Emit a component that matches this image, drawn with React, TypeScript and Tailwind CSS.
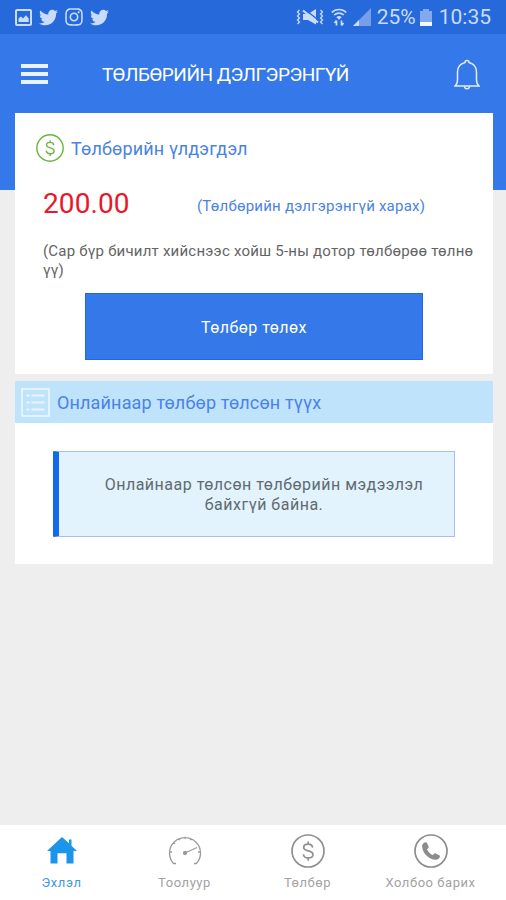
import React from "react";
import { FaTwitter, FaInstagram } from "react-icons/fa";

const DollarIcon: React.FC<{ className?: string }> = ({ className }) => (
  <svg
    viewBox="0 0 34 34"
    className={className}
    fill="none"
    stroke="currentColor"
    strokeWidth="1.7"
  >
    <circle cx="17" cy="17" r="16" />
    <path d="M21.6 13.6c-.3-2.2-2-3.4-4.4-3.4-2.6 0-4.5 1.3-4.5 3.3 0 4.5 9.3 2.3 9.3 7 0 2.1-2 3.4-4.7 3.4-2.8 0-4.7-1.4-4.9-3.7M17.2 7.5v2.7M17.2 24v2.7" />
  </svg>
);

const StatusBar: React.FC = () => (
  <div className="flex h-[34px] items-center justify-between bg-[#2669da] pl-[15px] pr-[15px] text-[#c9dcfb]">
    <div className="flex items-center gap-[7px]">
      <svg viewBox="0 0 17 17" className="h-[17px] w-[17px]">
        <rect x="1" y="1" width="15" height="15" rx="1" fill="none" stroke="currentColor" strokeWidth="2" />
        <path d="M3.500 13V9.500l2.500-2 2 2 3-3.200 2.700 3.200V13z" fill="currentColor" />
      </svg>
      <FaTwitter className="h-[19px] w-[19px]" />
      <FaInstagram className="h-[20px] w-[18px]" />
      <FaTwitter className="h-[19px] w-[19px]" />
    </div>
    <div className="flex items-center">
      <svg viewBox="0 0 28 18" className="h-[18px] w-[28px]" fill="none" stroke="currentColor" strokeWidth="1.3">
        <path d="M3.5 2l-2 2 2 2-2 2 2 2-2 2 2 2-2 2M24.5 2l2 2-2 2 2 2-2 2 2 2-2 2 2 2" />
        <path d="M7 6h5L20 1v15.500L12 12H7z" fill="currentColor" stroke="none" />
        <path d="M9.500 2l14 11" stroke="#2669da" strokeWidth="1.5" />
        <path d="M7 2.500l15 12" strokeWidth="2.2" />
      </svg>
      <svg viewBox="0 0 16 18" className="ml-[7px] h-[18px] w-[16px]" fill="none" stroke="currentColor" strokeWidth="1.7">
        <path d="M.8 4.5c4-4 10.4-4 14.4 0M3.2 7c2.7-2.6 6.900-2.600 9.600 0" />
        <path d="M5.3 9.2a4 4 0 015.4 0L8 11.8z" fill="currentColor" stroke="none" />
        <path d="M5.5 17.5v-5M3.4 15l2.1-2.5M10.5 12.500v5M12.600 15l-2.100 2.500" />
      </svg>
      <svg viewBox="0 0 18 18" className="ml-[6px] h-[18px] w-[18px]">
        <path d="M18 0v18H0z" fill="#759fe9" />
        <path d="M6 12v6H0z" fill="currentColor" />
      </svg>
      <span className="ml-[6px] text-[21px] leading-none">25%</span>
      <svg viewBox="0 0 12 17" className="ml-[4px] h-[17px] w-[12px]">
        <path d="M3 0h6v2h3v11H0V2h3z" fill="#82a9ee" />
        <path d="M0 13h12v4H0z" fill="#f2f7ff" />
      </svg>
      <span className="ml-[7px] text-[21px] leading-none">10:35</span>
    </div>
  </div>
);

const Header: React.FC = () => (
  <header className="flex h-[79px] items-center pl-[21px] pr-[26px] text-white">
    <div className="flex w-[27px] flex-col gap-[4px]">
      <span className="h-[4px] bg-[#eaf1ff]" />
      <span className="h-[4px] bg-[#eaf1ff]" />
      <span className="h-[4px] bg-[#eaf1ff]" />
    </div>
    <h1 className="ml-[54px] mt-[2px] text-[19px] leading-none tracking-[-0.5px]">
      ТӨЛБӨРИЙН ДЭЛГЭРЭНГҮЙ
    </h1>
    <svg
      viewBox="0 0 26 32"
      className="ml-auto mt-[3px] h-[32px] w-[26px]"
      fill="none"
      stroke="#e3edff"
      strokeWidth="1.5"
    >
      <path d="M11 3.5a2 2 0 014 0c4.8 1.2 7.5 4.4 7.5 9.5v8c0 3 .6 4.5 2.5 6H1c1.9-1.5 2.5-3 2.5-6v-8c0-5.1 2.7-8.3 7.5-9.500z" />
      <path d="M10.5 27.500c.3 3 4.700 3 5 0" />
    </svg>
  </header>
);

const BalanceCard: React.FC = () => (
  <section className="h-[261px] bg-white pt-[21px]">
    <div className="flex h-[28px] items-center pl-[21px]">
      <DollarIcon className="h-[28px] w-[28px] text-[#6db33f]" />
      <h2 className="ml-[7px] mt-[2px] text-[18px] leading-[28px] tracking-[0.15px] text-[#4a82e6]">
        Төлбөрийн үлдэгдэл
      </h2>
    </div>
    <div className="mt-[24px] flex items-center pl-[28px]">
      <span className="w-[154px] text-[28px] leading-[36px] tracking-[0.1px] text-[#ea1729]">
        200.00
      </span>
      <a className="mt-[5px] text-[15px] leading-[31px] tracking-[0.22px] text-[#4a82e6]">
        (Төлбөрийн дэлгэрэнгүй харах)
      </a>
    </div>
    <p className="mt-[20px] whitespace-nowrap pl-[28px] text-[15px] leading-[19px] tracking-[0.22px] text-[#646464]">
      (Сар бүр бичилт хийснээс хойш 5-ны дотор төлбөрөө төлнө
      <br />
      үү)
    </p>
    <button className="ml-[70px] mt-[13px] block h-[67px] w-[338px] border border-[#1c68e6] bg-[#3478ea] pt-[2px] text-[16px] tracking-[0.45px] text-white">
      Төлбөр төлөх
    </button>
  </section>
);

const HistoryCard: React.FC = () => (
  <section className="mt-[7px] h-[183px] bg-white">
    <div className="flex h-[42px] items-center bg-[#c0e3fc] pl-[6px]">
      <svg viewBox="0 0 29 29" className="h-[29px] w-[29px]" fill="none" stroke="#e6f5ff" strokeWidth="1.8">
        <rect x="1" y="1" width="27" height="27" />
        <path d="M10.5 7.5h13M10.5 14.5h13M10.5 21.5h13M5.5 7.5h3M5.5 14.5h3M5.5 21.5h3" />
      </svg>
      <h2 className="ml-[7px] mt-[2px] text-[18px] leading-none tracking-[0.15px] text-[#4a82e6]">
        Онлайнаар төлбөр төлсөн түүх
      </h2>
    </div>
    <div className="ml-[38px] mt-[28px] flex h-[86px] w-[402px] items-center justify-center rounded-[1px] border border-l-[6px] border-[#a9bdf0] border-l-[#116be8] bg-[#e2f3fe] pl-[15px] pt-[2px]">
      <p className="text-center text-[16px] leading-[20px] tracking-[0.5px] text-[#606a70]">
        Онлайнаар төлсөн төлбөрийн мэдээлэл
        <br />
        байхгүй байна.
      </p>
    </div>
  </section>
);

const TabBar: React.FC = () => (
  <nav className="mt-auto flex h-[75px] bg-white text-[13px] tracking-[0.55px] text-[#a3a3a3]">
    <a className="flex w-[123px] flex-col items-center pt-[9px] text-[#3f97ea]">
      <svg viewBox="0 0 30 34" className="h-[34px] w-[30px]" fill="#1c94ea">
        <path d="M15 3l7 6.300V5.500h2.500v6.200L30 17h-3.500v12.500h-7V19.300h-9v10.200h-7V17H0z" />
      </svg>
      <span className="mt-[5px] leading-[20px]">Эхлэл</span>
    </a>
    <a className="flex w-[123px] flex-col items-center pt-[9px]">
      <svg viewBox="0 0 34 34" className="h-[34px] w-[34px]" fill="none" stroke="#9b9b9b" strokeWidth="1.3">
        <path d="M8 29.5H5.5a15.5 15.5 0 1123 0H26M2 18h2M5.5 8.5l1.5 1.2M11 4.5l.8 1.8M17 2.8v2M23 4.500l-.8 1.800M32 18h-2" />
        <path d="M17 19l12-5.5" />
        <circle cx="17" cy="19" r="1.5" fill="#9b9b9b" />
      </svg>
      <span className="mt-[5px] leading-[20px]">Тоолуур</span>
    </a>
    <a className="flex w-[123px] flex-col items-center pt-[9px]">
      <DollarIcon className="h-[34px] w-[34px] text-[#909090]" />
      <span className="mt-[5px] leading-[20px]">Төлбөр</span>
    </a>
    <a className="flex w-[123px] flex-col items-center pt-[9px]">
      <svg viewBox="0 0 34 34" className="h-[34px] w-[34px] text-[#8c8c8c]">
        <circle cx="17" cy="17" r="16" fill="none" stroke="currentColor" strokeWidth="1.7" />
        <path
          d="M11.2 8.3c-2 .7-3.3 2.3-3.1 4.2.6 6.9 6.6 12.9 13.5 13.3 2 .1 3.7-1.1 4.3-3 .2-.6-.1-1.2-.6-1.5l-3.6-1.8c-.6-.3-1.2-.2-1.6.3l-1.2 1.3c-2.7-1.1-4.8-3.2-5.9-5.9l1.3-1.1c.4-.4.6-1 .4-1.500l-1.700-3.600c-.3-.6-1-.9-1.800-.7z"
          fill="currentColor"
        />
      </svg>
      <span className="mt-[5px] whitespace-nowrap leading-[20px]">
        Холбоо барих
      </span>
    </a>
  </nav>
);

const App: React.FC = () => {
  return (
    <div className="flex h-[900px] w-[506px] flex-col bg-[#eeeeee] font-['Roboto',sans-serif]">
      <StatusBar />
      <div className="h-[156px] bg-[#3478ea]">
        <Header />
      </div>
      <main className="-mt-[77px] ml-[15px] w-[478px]">
        <BalanceCard />
        <HistoryCard />
      </main>
      <TabBar />
    </div>
  );
};

export default App;
